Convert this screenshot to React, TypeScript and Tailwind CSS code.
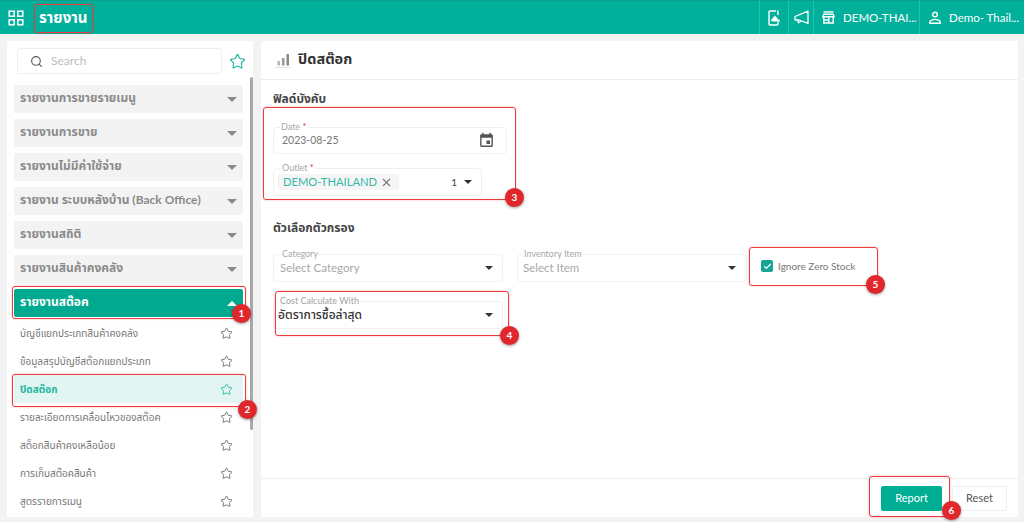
import React from "react";
import { Star, Search, X, Check } from "lucide-react";

const font = { fontFamily: '"Lato","Noto Sans","Noto Sans Thai","Liberation Sans",sans-serif' };

const Caret = ({ className = "", w = 10 }: { className?: string; w?: number }) => (
  <svg width={w} height={w / 2} viewBox="0 0 10 5" className={className}><path d="M0 0h10L5 5z" fill="currentColor" /></svg>
);

const Badge = ({ n, className }: { n: number; className: string }) => (
  <div className={"absolute w-[19px] h-[19px] rounded-full bg-[#e0272b] text-white text-[10px] font-bold flex items-center justify-center shadow-[0_1px_3px_rgba(0,0,0,0.4)] " + className}>{n}</div>
);

const Box = ({ className }: { className: string }) => (
  <div className={"absolute border-[1.5px] border-[#ee3a3f] rounded-[3px] pointer-events-none shadow-[0_0_2px_rgba(238,58,63,0.45)] " + className} />
);

const Field = ({ label, req, className = "", labelClass = "left-[7px]", children }: { label: string; req?: boolean; className?: string; labelClass?: string; children: React.ReactNode }) => (
  <div className={"relative border border-[#f0f0f0] rounded-[4px] bg-white flex items-center " + className}>
    <span className={"absolute -top-[7px] bg-white px-[1px] text-[9px] leading-[11px] text-[#a8a8a8] " + labelClass}>
      {label}{req && <span className="text-[#e0272b]"> *</span>}
    </span>
    {children}
  </div>
);

const groups = ["รายงานการขายรายเมนู", "รายงานการขาย", "รายงานไม่มีค่าใช้จ่าย", "รายงาน ระบบหลังบ้าน (Back Office)", "รายงานสถิติ", "รายงานสินค้าคงคลัง"];
const items = ["บัญชีแยกประเภทสินค้าคงคลัง", "ข้อมูลสรุปบัญชีสต๊อกแยกประเภท", "ปิดสต๊อก", "รายละเอียดการเคลื่อนไหวของสต๊อค", "สต็อกสินค้าคงเหลือน้อย", "การเก็บสต๊อคสินค้า", "สูตรรายการเมนู"];

export default function App() {
  return (
    <div style={font} className="relative w-[1024px] h-[522px] overflow-hidden bg-[#f3f3f3] flex flex-col">
      <header className="h-[34px] shrink-0 bg-[#00b09b] border-t border-[#0b9f8c] text-white flex items-center">
        <svg width="16" height="16" viewBox="0 0 16 16" fill="none" stroke="white" strokeWidth="1.5" className="ml-[8px]">
          <rect x="1.2" y="1.2" width="5" height="5" /><rect x="9.8" y="1.2" width="5" height="5" /><rect x="1.2" y="9.8" width="5" height="5" /><rect x="9.8" y="9.8" width="5" height="5" />
        </svg>
        <span className="ml-[15px] text-[15px] font-bold">รายงาน</span>
        <div className="ml-auto flex h-full text-[11.5px] whitespace-nowrap">
          <div className="w-[29px] border-l border-[#2bc0ad] flex items-center justify-center">
            <svg width="14" height="16" viewBox="0 0 14 16" fill="none" stroke="white" strokeWidth="1.4"><path d="M9 1H3a1 1 0 0 0-1 1v12a1 1 0 0 0 1 1h7a1 1 0 0 0 1-1v-2M11 5V2a1 1 0 0 0-1-1" /><path d="M5 10l3-3.5L11 10z" fill="white" /><path d="M5 10.8h8" /></svg>
          </div>
          <div className="w-[25px] border-l border-[#2bc0ad] flex items-center justify-center">
            <svg width="15" height="15" viewBox="0 0 15 15" fill="none" stroke="white" strokeWidth="1.3" strokeLinejoin="round"><path d="M14 1.2V13.3L5 10H1V6.5z" /><path d="M3.5 10.2l1 2.6 2.5-1.6" /></svg>
          </div>
          <div className="w-[106px] border-l border-[#2bc0ad] flex items-center pl-[8px] gap-[8px]">
            <svg width="13" height="13" viewBox="0 0 13 13" fill="none" stroke="white" strokeWidth="1.4"><path d="M1.5 1h10" /><path d="M1.8 3.2h9.4l.9 2.6H.9z" /><path d="M1.8 6v6h9.4V6M6.8 6v6M1.8 9h5" /></svg>
            <span>DEMO-THAI...</span>
          </div>
          <div className="w-[105px] border-l border-[#2bc0ad] flex items-center pl-[8px] gap-[7px]">
            <svg width="14" height="14" viewBox="0 0 14 14" fill="none" stroke="white" strokeWidth="1.4"><circle cx="7" cy="3.6" r="2.3" /><path d="M1.8 12.3v-1.4c0-1.5 3.2-2.5 5.2-2.5s5.2 1 5.2 2.5v1.4z" /></svg>
            <span>Demo- Thail...</span>
          </div>
        </div>
      </header>

      <div className="flex-1 flex gap-[8px] pl-[7px] pr-[6px] pt-[7px] pb-[5px] min-h-0">
        <aside className="relative w-[246px] bg-white overflow-hidden">
          <div className="flex items-center pl-[10px] pt-[7px]">
            <div className="w-[205px] h-[26px] border border-[#eeeeee] rounded-[3px] flex items-center pl-[12px] gap-[8px]">
              <Search size={13} strokeWidth={2} className="text-[#555]" />
              <span className="text-[12px] text-[#bdbdbd]">Search</span>
            </div>
            <Star size={17} strokeWidth={1.6} className="ml-[7px] text-[#1fb5a3]" />
          </div>
          <div className="pl-[7px] w-[236px] mt-[11px] flex flex-col gap-[6px]">
            {groups.map((g) => (
              <div key={g} className="h-[28px] bg-[#f3f3f3] rounded-[2px] flex items-center justify-between pl-[6px] pr-[6px] text-[12px] font-bold text-[#8a8a8a]">
                <span className="pb-[2px]">{g}</span><Caret className="text-[#8a8a8a]" />
              </div>
            ))}
            <div className="h-[28px] bg-[#00a98f] rounded-[2px] flex items-center justify-between pl-[6px] pr-[6px] text-[12px] font-bold text-white">
              <span className="pb-[2px]">รายงานสต๊อค</span><Caret className="rotate-180" />
            </div>
          </div>
          <div className="pl-[7px] w-[236px] mt-[2px] flex flex-col">
            {items.map((t, i) => (
              <div key={t} className={"h-[28px] shrink-0 flex items-center justify-between pl-[6px] pr-[10px] text-[10px] " + (i === 2 ? "bg-[#e3f5f2] text-[#1fb5a3] font-bold" : "text-[#777]")}>
                <span>{t}</span><Star size={13} strokeWidth={1.6} className={i === 2 ? "text-[#1fb5a3]" : "text-[#666]"} />
              </div>
            ))}
          </div>
          <div className="absolute right-0 top-[36px] w-[3px] h-[353px] bg-[#a9a9a9] rounded-full" />
        </aside>

        <main className="flex-1 bg-white flex flex-col min-w-0">
          <div className="h-[39px] shrink-0 border-b border-[#eeeeee] flex items-center pl-[15px] gap-[7px]">
            <svg width="15" height="15" viewBox="0 0 15 15"><rect x="1.5" y="8" width="2.5" height="4.5" fill="#b5b5b5" /><rect x="6" y="5" width="2.5" height="7.5" fill="#999" /><rect x="10.5" y="1" width="2.5" height="11.5" fill="#888" /><path d="M0 14.5h15" stroke="#e2e2e2" /></svg>
            <span className="text-[14.5px] font-bold text-[#333] pb-[2px]">ปิดสต๊อก</span>
          </div>
          <div className="flex-1 pl-[12px] pt-[11px]">
            <h3 className="text-[12px] leading-[16px] font-bold text-[#444]">ฟิลด์บังคับ</h3>
            <Field label="Date" req labelClass="left-[6px]" className="w-[234px] h-[27px] mt-[20px] pl-[8px] pr-[11px] justify-between text-[10.5px] text-[#777]">
              <span>2023-08-25</span>
              <svg width="17" height="17" viewBox="0 0 24 24" fill="#555"><path d="M17 12h-5v5h5v-5zM16 1v2H8V1H6v2H5c-1.11 0-1.99.9-1.99 2L3 19c0 1.1.89 2 2 2h14c1.1 0 2-.9 2-2V5c0-1.1-.9-2-2-2h-1V1h-2zm3 18H5V8h14v11z" /></svg>
            </Field>
            <Field label="Outlet" req className="w-[209px] h-[28px] mt-[14px] pl-[4px] pr-[9px] justify-between">
              <span className="h-[16px] pl-[5px] pr-[6px] bg-[#f5f5f5] rounded-[2px] flex items-center gap-[3px] text-[11.2px] text-[#35b8a6]">DEMO-THAILAND<X size={13} className="text-[#777]" /></span>
              <span className="flex items-center gap-[7px] text-[10px] text-[#444]">1<Caret w={8} className="text-[#333]" /></span>
            </Field>
            <h3 className="mt-[24px] text-[12px] leading-[16px] font-bold text-[#444]">ตัวเลือกตัวกรอง</h3>
            <div className="mt-[18px] flex items-center gap-[14px]">
              <Field label="Category" className="w-[230px] h-[28px] pl-[6px] pr-[9px] justify-between text-[11.5px] text-[#a8a8a8]">
                <span>Select Category</span><Caret w={8} className="text-[#333]" />
              </Field>
              <Field label="Inventory Item" labelClass="left-[5px]" className="w-[230px] h-[28px] pl-[5px] pr-[10px] justify-between text-[11.5px] text-[#a8a8a8]">
                <span>Select Item</span><Caret w={8} className="text-[#333]" />
              </Field>
              <div className="flex items-center gap-[5px] text-[10px] text-[#777] mb-[4px]">
                <span className="w-[12px] h-[12px] rounded-[2px] bg-[#16a594] flex items-center justify-center"><Check size={9} strokeWidth={3} className="text-white" /></span>
                Ignore Zero Stock
              </div>
            </div>
            <Field label="Cost Calculate With" labelClass="left-[5px]" className="w-[230px] h-[28px] mt-[19px] pl-[4px] pr-[9px] justify-between text-[12px] font-medium text-[#333]">
              <span>อัตราการซื้อล่าสุด</span><Caret w={8} className="text-[#333]" />
            </Field>
          </div>
          <div className="h-[39px] shrink-0 border-t border-[#eeeeee] flex items-center justify-end gap-[10px] pr-[11px]">
            <button className="w-[61px] h-[25px] rounded-[2px] bg-[#00ae96] text-white text-[11px]">Report</button>
            <button className="w-[55px] h-[25px] rounded-[2px] border border-[#eeeeee] text-[#555] text-[11px]">Reset</button>
          </div>
        </main>
      </div>

      <Box className="left-[34px] top-[4px] w-[59px] h-[29px]" />
      <Box className="left-[12px] top-[286px] w-[234px] h-[33px]" />
      <Box className="left-[12px] top-[374px] w-[234px] h-[33px]" />
      <Box className="left-[263px] top-[107px] w-[253px] h-[93px]" />
      <Box className="left-[275px] top-[291px] w-[234px] h-[45px]" />
      <Box className="left-[749px] top-[247px] w-[129px] h-[39px]" />
      <Box className="left-[869px] top-[476px] w-[81px] h-[41px]" />
      <Badge n={1} className="left-[232px] top-[304px]" />
      <Badge n={2} className="left-[238px] top-[400px]" />
      <Badge n={3} className="left-[505px] top-[188px]" />
      <Badge n={4} className="left-[500px] top-[326px]" />
      <Badge n={5} className="left-[866px] top-[275px]" />
      <Badge n={6} className="left-[942px] top-[501px]" />
    </div>
  );
}
